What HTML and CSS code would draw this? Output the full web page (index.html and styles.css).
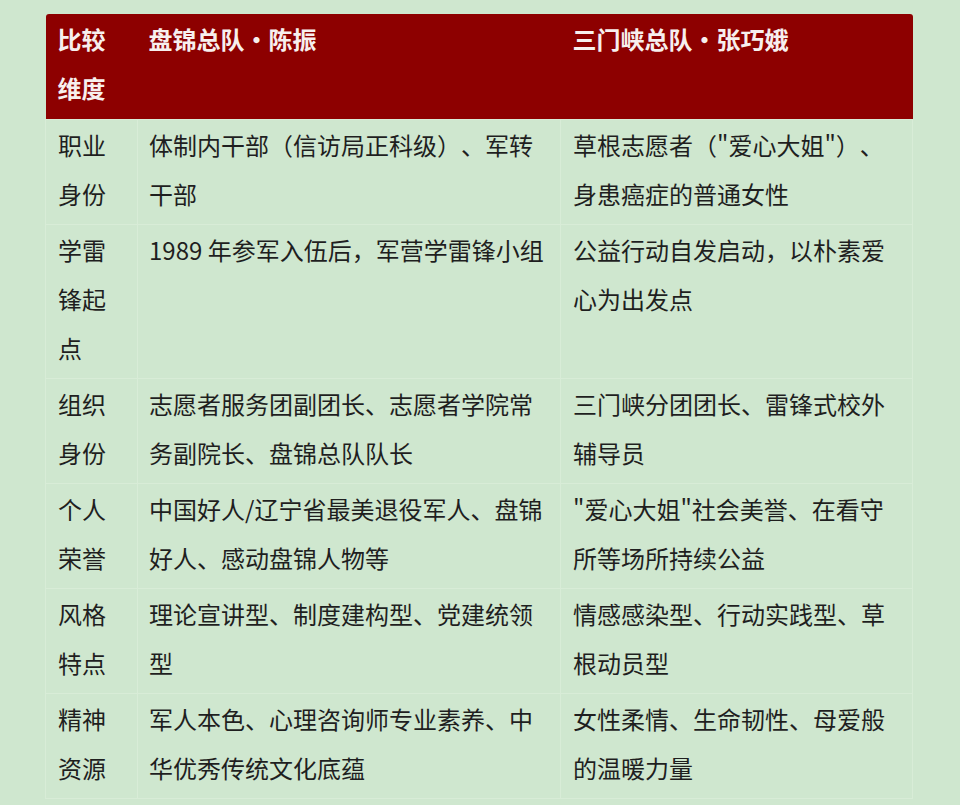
FILE: index.html
```html
<!DOCTYPE html>
<html lang="zh-CN">
<head>
<meta charset="utf-8">
<link rel="stylesheet" href="styles.css">
</head>
<body>
<table class="cmp">
  <colgroup>
    <col class="c1"><col class="c2"><col class="c3">
  </colgroup>
  <thead>
    <tr>
      <th>比较维度</th>
      <th>盘锦总队・陈振</th>
      <th>三门峡总队・张巧娥</th>
    </tr>
  </thead>
  <tbody>
    <tr>
      <td>职业身份</td>
      <td>体制内干部（信访局正科级）、军转干部</td>
      <td>草根志愿者（"爱心大姐"）、身患癌症的普通女性</td>
    </tr>
    <tr>
      <td>学雷锋起点</td>
      <td>1989 年参军入伍后，军营学雷锋小组</td>
      <td>公益行动自发启动，以朴素爱心为出发点</td>
    </tr>
    <tr>
      <td>组织身份</td>
      <td>志愿者服务团副团长、志愿者学院常务副院长、盘锦总队队长</td>
      <td>三门峡分团团长、雷锋式校外辅导员</td>
    </tr>
    <tr>
      <td>个人荣誉</td>
      <td>中国好人/辽宁省最美退役军人、盘锦好人、感动盘锦人物等</td>
      <td>"爱心大姐"社会美誉、在看守所等场所持续公益</td>
    </tr>
    <tr>
      <td>风格特点</td>
      <td>理论宣讲型、制度建构型、党建统领型</td>
      <td>情感感染型、行动实践型、草根动员型</td>
    </tr>
    <tr>
      <td>精神资源</td>
      <td>军人本色、心理咨询师专业素养、中华优秀传统文化底蕴</td>
      <td>女性柔情、生命韧性、母爱般的温暖力量</td>
    </tr>
  </tbody>
</table>
</body>
</html>
```

FILE: styles.css
```css
html, body {
  margin: 0;
  padding: 0;
  background: #cfe7cf;
}
body {
  padding: 14px 0 0 45px;
  font-family: "Noto Sans CJK SC", "Noto Sans", sans-serif;
  color: #1f1f1f;
  text-spacing-trim: space-all;
}
.cmp {
  border-collapse: collapse;
  table-layout: fixed;
  width: 867px;
  font-size: 24px;
  line-height: 49px;
  text-spacing-trim: space-all;
}
.c1 { width: 92px; }
.c2 { width: 423px; }
.c3 { width: 352px; }
.cmp th, .cmp td {
  text-align: left;
  vertical-align: top;
  padding: 3px 12px 3px 12px;
  word-break: break-all;
}
.cmp th {
  background: #8d0000;
  color: #f7efee;
  font-weight: 700;
  border: none;
  padding-top: 0;
  padding-bottom: 7px;
}
.cmp thead tr th:first-child { border-top-left-radius: 3px; }
.cmp thead tr th:last-child { border-top-right-radius: 3px; }
.cmp td {
  border: 1px solid #d8ecd7;
  padding-top: 0;
  padding-bottom: 6px;
}
.cmp td:nth-child(2) { padding-left: 11px; }
.cmp td:nth-child(3) { padding-left: 12px; }
.cmp th:nth-child(2) { padding-left: 11px; }
.cmp th:nth-child(3) { padding-left: 12px; }
```
